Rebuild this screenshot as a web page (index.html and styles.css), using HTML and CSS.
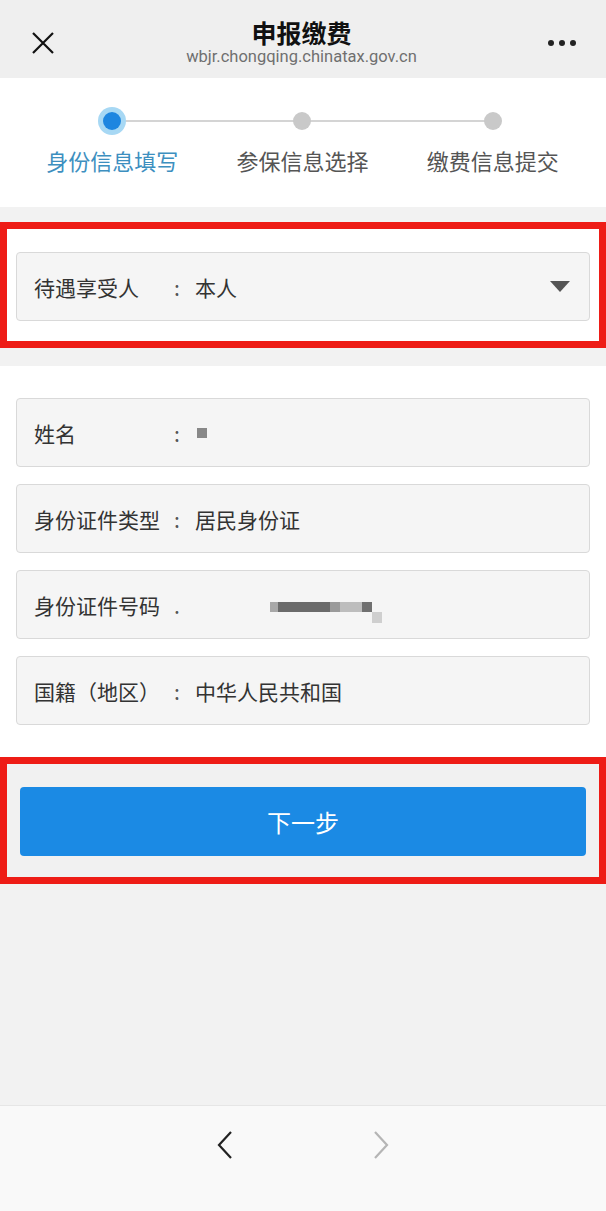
FILE: index.html
```html
<!DOCTYPE html>
<html lang="zh-CN">
<head>
<meta charset="UTF-8">
<meta name="viewport" content="width=device-width, initial-scale=1.0">
<title>申报缴费</title>
<link rel="stylesheet" href="styles.css">
</head>
<body>

<div class="page">

    <!-- TOP BAR -->
    <div class="topbar">
        <div class="close">
            <svg width="24" height="24" viewBox="0 0 24 24">
                <path d="M2 2 L22 22 M22 2 L2 22" stroke="#111" stroke-width="2.2" fill="none"/>
            </svg>
        </div>
        <div class="title">
            <div class="name">申报缴费</div>
            <div class="url">wbjr.chongqing.chinatax.gov.cn</div>
        </div>
        <div class="more">
            <span></span><span></span><span></span>
        </div>
    </div>

    <!-- STEPS -->
    <div class="steps">
        <div class="line"></div>
        <div class="step active">
            <div class="dot"></div>
            <div class="label">身份信息填写</div>
        </div>
        <div class="step">
            <div class="dot"></div>
            <div class="label">参保信息选择</div>
        </div>
        <div class="step">
            <div class="dot"></div>
            <div class="label">缴费信息提交</div>
        </div>
    </div>

    <!-- WHO -->
    <div class="mark mark-select">
        <div class="field">
            <span class="key">待遇享受人</span>
            <span class="colon">:</span>
            <span class="val">本人</span>
            <span class="arrow"></span>
        </div>
    </div>

    <!-- INFO -->
    <div class="info">
        <div class="field">
            <span class="key">姓名</span>
            <span class="colon">:</span>
            <span class="val"><i class="blur-name"></i></span>
        </div>
        <div class="field">
            <span class="key">身份证件类型</span>
            <span class="colon">:</span>
            <span class="val">居民身份证</span>
        </div>
        <div class="field">
            <span class="key">身份证件号码</span>
            <span class="colon">.</span>
            <span class="val id">
                <i class="px" style="width:8px;background:#a8a8a8"></i><i class="px" style="width:52px;background:#6b6b6b"></i><i class="px" style="width:10px;background:#9a9a9a"></i><i class="px" style="width:22px;background:#bdbdbd"></i><i class="px" style="width:10px;background:#707070"></i><i class="px low" style="width:10px;background:#cfcfcf"></i>
            </span>
        </div>
        <div class="field">
            <span class="key">国籍（地区）</span>
            <span class="colon">:</span>
            <span class="val">中华人民共和国</span>
        </div>
    </div>

    <!-- NEXT -->
    <div class="mark mark-btn">
        <button class="next">下一步</button>
    </div>

    <div class="filler"></div>

    <!-- BROWSER NAV -->
    <div class="bottombar">
        <svg width="18" height="30" viewBox="0 0 18 30">
            <path d="M15 2 L3 15 L15 28" stroke="#222" stroke-width="2.2" fill="none"/>
        </svg>
        <svg width="18" height="30" viewBox="0 0 18 30">
            <path d="M3 2 L15 15 L3 28" stroke="#b5b5b5" stroke-width="2.2" fill="none"/>
        </svg>
    </div>

</div>

</body>
</html>
```

FILE: styles.css
```css
*{
    margin:0;
    padding:0;
    box-sizing:border-box;
    font-family:"Noto Sans CJK SC","Noto Sans",sans-serif;
}

body{
    background:#f2f2f2;
}

.page{
    min-height:100vh;
    display:flex;
    flex-direction:column;
}

/* TOP BAR */

.topbar{
    height:78px;
    background:#efefef;
    display:flex;
    align-items:center;
    padding:0 30px 0 31px;
}

.close{
    width:24px;
    height:24px;
    margin-top:8px;
}

.close svg{
    display:block;
}

.title{
    flex:1;
    text-align:center;
    padding-top:6px;
}

.title .name{
    font-size:25px;
    font-weight:bold;
    color:#111;
    line-height:30px;
}

.title .url{
    font-family:Roboto,"Liberation Sans",sans-serif;
    font-size:16.5px;
    color:#6f6f6f;
    line-height:20px;
}

.more{
    display:flex;
    gap:5px;
    margin-top:8px;
}

.more span{
    width:6px;
    height:6px;
    border-radius:50%;
    background:#222;
}

/* STEPS */

.steps{
    height:129px;
    background:white;
    display:grid;
    grid-template-columns:1fr 1fr 1fr;
    padding:0 18px 0 17px;
    position:relative;
}

.line{
    position:absolute;
    top:42px;
    left:113px;
    right:113px;
    height:2px;
    background:#d4d4d4;
}

.step{
    display:flex;
    flex-direction:column;
    align-items:center;
    padding-top:34px;
    position:relative;
}

.dot{
    width:18px;
    height:18px;
    border-radius:50%;
    background:#c9c9c9;
    margin-bottom:16px;
}

.step.active .dot{
    background:#1e86e0;
    box-shadow:0 0 0 5px #a7d8f4;
}

.label{
    font-size:22px;
    color:#555;
    line-height:28px;
}

.step.active .label{
    color:#3d8fbf;
}

/* RED MARKED BOXES */

.mark{
    border:7px solid #ee1c16;
    margin-top:15px;
}

.mark-select{
    background:white;
    padding:23px 9px 20px;
}

.mark-btn{
    margin-top:0;
    background:#f1f1f1;
    padding:23px 13px 21px;
}

/* FIELDS */

.field{
    height:69px;
    background:#f5f5f5;
    border:1px solid #d9d9d9;
    border-radius:4px;
    display:flex;
    align-items:center;
    padding:0 18px 0 17px;
    font-size:21px;
    color:#333;
}

.key{
    width:140px;
}

.colon{
    width:21px;
    color:#555;
}

.val{
    flex:1;
    display:flex;
    align-items:center;
}

.arrow{
    width:0;
    height:0;
    border-left:10px solid transparent;
    border-right:10px solid transparent;
    border-top:11px solid #555;
    margin-right:1px;
}

.info{
    margin-top:18px;
    background:white;
    padding:32px 16px;
    display:flex;
    flex-direction:column;
    gap:17px;
}

.blur-name{
    width:10px;
    height:10px;
    background:#888;
    margin-left:2px;
}

.val.id{
    padding-left:75px;
    margin-top:4px;
}

.px{
    height:10px;
}

.px.low{
    margin-top:22px;
    height:11px;
}

/* BUTTON */

.next{
    width:100%;
    height:69px;
    border:none;
    border-radius:4px;
    background:#1b8ae4;
    color:white;
    font-size:24px;
}

.filler{
    flex:1;
}

/* BOTTOM BAR */

.bottombar{
    height:106px;
    background:#f9f9f9;
    border-top:1px solid #e6e6e6;
    display:flex;
    justify-content:center;
    gap:138px;
    padding-top:24px;
}

.bottombar svg{
    display:block;
}
```
